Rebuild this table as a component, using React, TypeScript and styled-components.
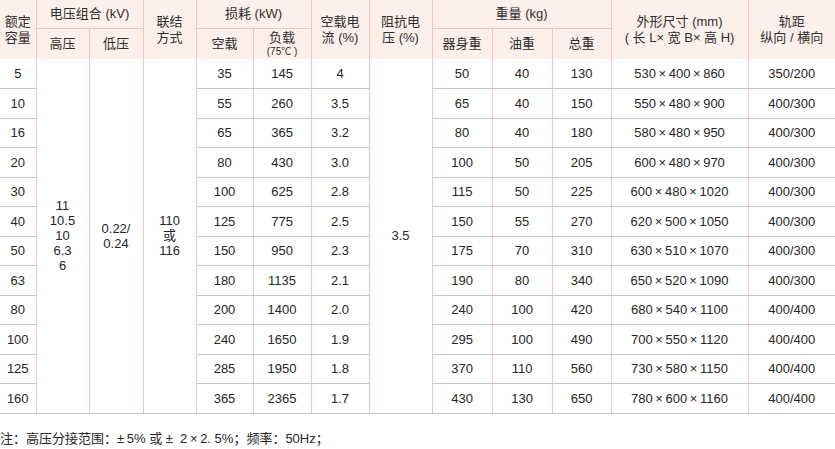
import React from "react";
import styled, { createGlobalStyle } from "styled-components";

const Global = createGlobalStyle`
  html, body { margin: 0; padding: 0; background: #ffffff; }
  body { font-family: "Liberation Sans", "Noto Sans CJK SC", sans-serif; color: #2a2a2a; }
`;

const PINK = "#f5c4b9";
const GREY = "#c6c6c6";

const Page = styled.div`
  width: 835px;
  display: flex;
  flex-direction: column;
`;

const Table = styled.table`
  width: 835px;
  border-collapse: collapse;
  table-layout: fixed;
  font-family: "Liberation Sans", "Noto Sans CJK SC", sans-serif;
`;

const HeadRow = styled.tr<{ $h: number }>`
  height: ${(p) => p.$h}px;
  background: #fdefe9;
`;

const HeadCell = styled.th<{ $last?: boolean; $split?: boolean }>`
  font-weight: 400;
  font-size: 13px;
  line-height: 16px;
  color: #2e2e2e;
  text-align: center;
  vertical-align: middle;
  padding: 0;
  border-right: ${(p) => (p.$last ? "none" : `1px solid ${PINK}`)};
  border-bottom: ${(p) => (p.$split ? `1px solid ${PINK}` : "none")};
`;

const Small = styled.span`
  display: block;
  font-size: 10px;
  line-height: 11px;
`;

const BodyRow = styled.tr`
  height: 29.5px;
`;

const Cell = styled.td<{ $last?: boolean }>`
  font-size: 13px;
  line-height: 15px;
  color: #262626;
  text-align: center;
  vertical-align: middle;
  padding: 0;
  border-right: ${(p) => (p.$last ? "none" : `1px solid ${PINK}`)};
  border-bottom: 1px solid ${GREY};
`;

const Note = styled.div`
  font-family: "Liberation Sans", "Noto Sans CJK SC", sans-serif;
  font-size: 13px;
  color: #262626;
  margin-top: 17px;
  line-height: 16px;
  white-space: pre;
`;

const widths = [36, 53, 54, 53, 57, 58, 58, 63, 60, 60, 59, 137, 87];

type Row = string[];

const rows: Row[] = [
  ["5", "35", "145", "4", "50", "40", "130", "530×400×860", "350/200"],
  ["10", "55", "260", "3.5", "65", "40", "150", "550×480×900", "400/300"],
  ["16", "65", "365", "3.2", "80", "40", "180", "580×480×950", "400/300"],
  ["20", "80", "430", "3.0", "100", "50", "205", "600×480×970", "400/300"],
  ["30", "100", "625", "2.8", "115", "50", "225", "600×480×1020", "400/300"],
  ["40", "125", "775", "2.5", "150", "55", "270", "620×500×1050", "400/300"],
  ["50", "150", "950", "2.3", "175", "70", "310", "630×510×1070", "400/300"],
  ["63", "180", "1135", "2.1", "190", "80", "340", "650×520×1090", "400/300"],
  ["80", "200", "1400", "2.0", "240", "100", "420", "680×540×1100", "400/400"],
  ["100", "240", "1650", "1.9", "295", "100", "490", "700×550×1120", "400/400"],
  ["125", "285", "1950", "1.8", "370", "110", "560", "730×580×1150", "400/400"],
  ["160", "365", "2365", "1.7", "430", "130", "650", "780×600×1160", "400/400"],
];

const dim = (s: string) => s.split("×").join("\u2009×\u2009");

export default function App() {
  return (
    <Page>
      <Global />
      <Table>
        <colgroup>
          {widths.map((w, i) => (
            <col key={i} style={{ width: w }} />
          ))}
        </colgroup>
        <thead>
          <HeadRow $h={28}>
            <HeadCell rowSpan={2}>
              额定
              <br />
              容量
            </HeadCell>
            <HeadCell colSpan={2} $split>
              电压组合 (kV)
            </HeadCell>
            <HeadCell rowSpan={2}>
              联结
              <br />
              方式
            </HeadCell>
            <HeadCell colSpan={2} $split>
              损耗 (kW)
            </HeadCell>
            <HeadCell rowSpan={2}>
              空载电
              <br />
              流 (%)
            </HeadCell>
            <HeadCell rowSpan={2}>
              阻抗电
              <br />
              压 (%)
            </HeadCell>
            <HeadCell colSpan={3} $split>
              重量 (kg)
            </HeadCell>
            <HeadCell rowSpan={2}>
              外形尺寸 (mm)
              <br />( 长 L× 宽 B× 高 H)
            </HeadCell>
            <HeadCell rowSpan={2} $last>
              轨距
              <br />
              纵向 / 横向
            </HeadCell>
          </HeadRow>
          <HeadRow $h={31}>
            <HeadCell>高压</HeadCell>
            <HeadCell>低压</HeadCell>
            <HeadCell>空载</HeadCell>
            <HeadCell>
              负载
              <Small>(75℃ )</Small>
            </HeadCell>
            <HeadCell>器身重</HeadCell>
            <HeadCell>油重</HeadCell>
            <HeadCell>总重</HeadCell>
          </HeadRow>
        </thead>
        <tbody>
          {rows.map((r, i) => (
            <BodyRow key={r[0]}>
              <Cell>{r[0]}</Cell>
              {i === 0 && (
                <>
                  <Cell rowSpan={12}>
                    11
                    <br />
                    10.5
                    <br />
                    10
                    <br />
                    6.3
                    <br />6
                  </Cell>
                  <Cell rowSpan={12}>
                    0.22/
                    <br />
                    0.24
                  </Cell>
                  <Cell rowSpan={12}>
                    110
                    <br />或<br />
                    116
                  </Cell>
                </>
              )}
              <Cell>{r[1]}</Cell>
              <Cell>{r[2]}</Cell>
              <Cell>{r[3]}</Cell>
              {i === 0 && <Cell rowSpan={12}>3.5</Cell>}
              <Cell>{r[4]}</Cell>
              <Cell>{r[5]}</Cell>
              <Cell>{r[6]}</Cell>
              <Cell>{dim(r[7])}</Cell>
              <Cell $last>{r[8]}</Cell>
            </BodyRow>
          ))}
        </tbody>
      </Table>
      <Note>{"注：高压分接范围：±\u20095% 或 ±  2\u2009×\u20092. 5%；频率：50Hz；"}</Note>
    </Page>
  );
}
